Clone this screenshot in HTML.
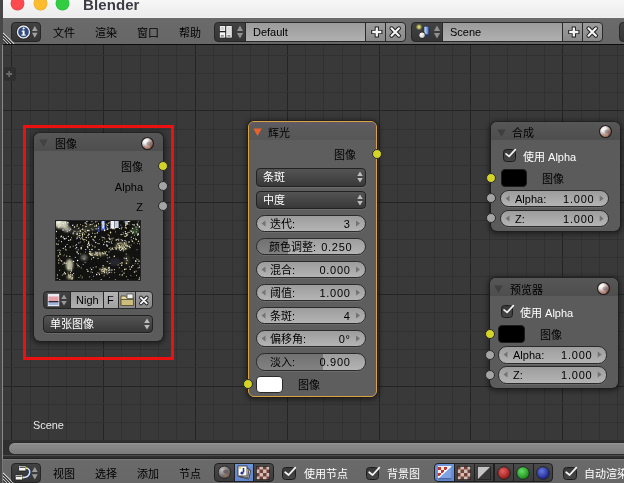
<!DOCTYPE html>
<html lang="zh"><head><meta charset="utf-8"><title>Blender</title>
<style>
html,body{margin:0;padding:0}
body{width:624px;height:483px;overflow:hidden;position:relative;background:#393939;font-family:"Liberation Sans","Noto Sans CJK SC",sans-serif;font-size:11px;line-height:1;color:#000}
.a{position:absolute}
.t{position:absolute;white-space:nowrap;line-height:14px;height:14px;will-change:transform}
.w{color:#fff}
.hdr{position:absolute;left:3px;width:621px;background:linear-gradient(#6a6a6a,#676767)}
.dk{position:absolute;background:linear-gradient(#424242,#353535);border:1px solid #262626;box-sizing:border-box}
.lt{position:absolute;background:linear-gradient(#9b9b9b,#b0b0b0);border:1px solid #292929;box-sizing:border-box}
.btn{position:absolute;background:linear-gradient(#9c9c9c,#8a8a8a);border:1px solid #292929;box-sizing:border-box}
.node{position:absolute;box-sizing:border-box;border-radius:6px;background:#5b5b5b;box-shadow:0 0 0 .6px rgba(20,20,20,.6),0 1px 5px 2px rgba(0,0,0,.45)}
.nh{position:absolute;left:0;top:0;right:0;height:18px;border-radius:6px 6px 0 0;background:linear-gradient(#575757,#4e4e4e)}
.sock{position:absolute;width:10px;height:10px;border-radius:50%;border:1px solid #2a2a2a;box-sizing:border-box}
.sy{background:#d3d328}
.sg{background:#a4a4a4}
.num{position:absolute;height:17.5px;box-sizing:border-box;border:1px solid #2b2b2b;border-radius:8.5px;background:linear-gradient(#9d9d9d,#b4b4b4);box-shadow:0 1px 0 rgba(255,255,255,.09)}
.dd{position:absolute;height:18.4px;box-sizing:border-box;border:1px solid #222;border-radius:4px;background:linear-gradient(#545454,#383838);box-shadow:0 1px 0 rgba(255,255,255,.09)}
.cb{position:absolute;width:13.6px;height:13.6px;box-sizing:border-box;border:1px solid #1c1c1c;border-radius:3.5px;background:linear-gradient(#383838,#464646)}
.n12{font-size:11px}
.nv{letter-spacing:.75px}
</style></head>
<body>
<svg class="a" style="left:0;top:45px" width="624" height="397" shape-rendering="crispEdges">
<rect x="0" y="0" width="624" height="397" fill="#393939"/>
<rect x="11" y="0" width="1" height="397" fill="#242424"/>
<rect x="30" y="0" width="1" height="397" fill="#313131"/>
<rect x="48" y="0" width="1" height="397" fill="#313131"/>
<rect x="66" y="0" width="1" height="397" fill="#313131"/>
<rect x="85" y="0" width="1" height="397" fill="#313131"/>
<rect x="103" y="0" width="1" height="397" fill="#242424"/>
<rect x="121" y="0" width="1" height="397" fill="#313131"/>
<rect x="140" y="0" width="1" height="397" fill="#313131"/>
<rect x="158" y="0" width="1" height="397" fill="#313131"/>
<rect x="176" y="0" width="1" height="397" fill="#313131"/>
<rect x="195" y="0" width="1" height="397" fill="#242424"/>
<rect x="213" y="0" width="1" height="397" fill="#313131"/>
<rect x="232" y="0" width="1" height="397" fill="#313131"/>
<rect x="250" y="0" width="1" height="397" fill="#313131"/>
<rect x="268" y="0" width="1" height="397" fill="#313131"/>
<rect x="287" y="0" width="1" height="397" fill="#242424"/>
<rect x="305" y="0" width="1" height="397" fill="#313131"/>
<rect x="323" y="0" width="1" height="397" fill="#313131"/>
<rect x="342" y="0" width="1" height="397" fill="#313131"/>
<rect x="360" y="0" width="1" height="397" fill="#313131"/>
<rect x="379" y="0" width="1" height="397" fill="#242424"/>
<rect x="397" y="0" width="1" height="397" fill="#313131"/>
<rect x="415" y="0" width="1" height="397" fill="#313131"/>
<rect x="434" y="0" width="1" height="397" fill="#313131"/>
<rect x="452" y="0" width="1" height="397" fill="#313131"/>
<rect x="470" y="0" width="1" height="397" fill="#242424"/>
<rect x="489" y="0" width="1" height="397" fill="#313131"/>
<rect x="507" y="0" width="1" height="397" fill="#313131"/>
<rect x="526" y="0" width="1" height="397" fill="#313131"/>
<rect x="544" y="0" width="1" height="397" fill="#313131"/>
<rect x="562" y="0" width="1" height="397" fill="#242424"/>
<rect x="581" y="0" width="1" height="397" fill="#313131"/>
<rect x="599" y="0" width="1" height="397" fill="#313131"/>
<rect x="617" y="0" width="1" height="397" fill="#313131"/>
<rect x="0" y="10" width="624" height="1" fill="#313131"/>
<rect x="0" y="28" width="624" height="1" fill="#313131"/>
<rect x="0" y="47" width="624" height="1" fill="#313131"/>
<rect x="0" y="65" width="624" height="1" fill="#242424"/>
<rect x="0" y="84" width="624" height="1" fill="#313131"/>
<rect x="0" y="102" width="624" height="1" fill="#313131"/>
<rect x="0" y="120" width="624" height="1" fill="#313131"/>
<rect x="0" y="139" width="624" height="1" fill="#313131"/>
<rect x="0" y="157" width="624" height="1" fill="#242424"/>
<rect x="0" y="175" width="624" height="1" fill="#313131"/>
<rect x="0" y="194" width="624" height="1" fill="#313131"/>
<rect x="0" y="212" width="624" height="1" fill="#313131"/>
<rect x="0" y="231" width="624" height="1" fill="#313131"/>
<rect x="0" y="249" width="624" height="1" fill="#242424"/>
<rect x="0" y="267" width="624" height="1" fill="#313131"/>
<rect x="0" y="286" width="624" height="1" fill="#313131"/>
<rect x="0" y="304" width="624" height="1" fill="#313131"/>
<rect x="0" y="322" width="624" height="1" fill="#313131"/>
<rect x="0" y="341" width="624" height="1" fill="#242424"/>
<rect x="0" y="359" width="624" height="1" fill="#313131"/>
<rect x="0" y="377" width="624" height="1" fill="#313131"/>
</svg>
<div class="a" style="left:0;top:0;width:3px;height:483px;background:#474747"></div>
<div class="a" style="left:1.9px;top:45px;width:1.3px;height:414px;background:#8a8a8a"></div>
<div class="a" style="left:3px;top:0;width:621px;height:18px;background:linear-gradient(#f7f7f7,#ececec 88%,#f1f1f1)"></div>
<div class="a" style="left:10.6px;top:-2.9px;width:13px;height:13px;border-radius:50%;background:#fc4a4f;box-shadow:0 0 0 .4px #e0383e"></div>
<div class="a" style="left:33.5px;top:-2.9px;width:13px;height:13px;border-radius:50%;background:#fdbc2e;box-shadow:0 0 0 .4px #e0a028"></div>
<div class="a" style="left:56.4px;top:-2.9px;width:13px;height:13px;border-radius:50%;background:#32cd41;box-shadow:0 0 0 .4px #27b335"></div>
<div class="t" style="left:82.5px;top:-5.5px;font-size:15px;font-weight:bold;line-height:20px;height:20px;color:#3d3d45;letter-spacing:.1px">Blender</div>
<div class="hdr" style="top:18px;height:26px"></div>
<div class="a" style="left:3px;top:43.8px;width:621px;height:1.6px;background:#0c0c0c"></div>
<svg class="a" style="left:3px;top:32px" width="13" height="12"><path d="M0 1 L11 12 M0 4 L8 12 M0 7 L5 12" stroke="#d8d8d8" stroke-width="1.3"/><path d="M0 2.5 L9.5 12 M0 5.5 L6.5 12 M0 8.5 L3.5 12" stroke="#333" stroke-width="1.2"/></svg>
<div class="dk" style="left:11px;top:22px;width:30px;height:20px;border-radius:4px"></div>
<svg class="a" style="left:14.8px;top:24px" width="26" height="16"><circle cx="8.5" cy="8" r="6" fill="#2f4a80" stroke="#e8e8e8" stroke-width="1.4"/><circle cx="8.5" cy="8" r="7.2" fill="none" stroke="#222" stroke-width=".6"/><rect x="7.6" y="6.6" width="2" height="4.6" fill="#fff"/><rect x="6.6" y="6.6" width="2" height="1" fill="#fff"/><rect x="6.4" y="10.6" width="4.4" height="1" fill="#fff"/><circle cx="8.6" cy="4.5" r="1.1" fill="#fff"/><path d="M19.8 2 L22.6 7 L17 7 Z M19.8 13.8 L22.6 8.8 L17 8.8 Z" fill="#a2a2a2"/></svg>
<div class="t" style="left:53px;top:26px">文件</div>
<div class="t" style="left:95px;top:26px">渲染</div>
<div class="t" style="left:137px;top:26px">窗口</div>
<div class="t" style="left:179px;top:26px">帮助</div>
<div class="dk" style="left:214px;top:22.1px;width:32px;height:19.8px;border-radius:4px 0 0 4px"></div>
<svg class="a" style="left:219px;top:25px" width="16" height="14"><rect x=".2" y=".4" width="13.2" height="12.8" rx="1.2" fill="#222"/><rect x=".8" y="1" width="5.4" height="5" fill="#efefef"/><rect x=".8" y="7.3" width="5.4" height="5.3" fill="#f6f6f6"/><rect x="7.2" y="1" width="5.6" height="11.6" fill="#efefef"/><rect x="1.8" y="10.4" width="3" height="1" fill="#444"/><rect x="8.4" y="10.4" width="3" height="1" fill="#444"/><rect x="1.6" y="2" width="3.6" height="3" fill="#d2d2d2"/><rect x="8.2" y="2" width="3.6" height="7" fill="#dcdcdc"/></svg>
<svg class="a" style="left:235.7px;top:24.7px" width="8" height="14"><path d="M4 .4 L7.1 6 L.9 6 Z M4 13.6 L7.1 8 L.9 8 Z" fill="#909090"/></svg>
<div class="lt" style="left:245px;top:22.1px;width:121px;height:19.8px"></div>
<div class="t" style="left:253px;top:25.4px">Default</div>
<div class="btn" style="left:365px;top:22.1px;width:21px;height:19.8px"></div>
<div class="btn" style="left:385px;top:22.1px;width:21px;height:19.8px;border-radius:0 4px 4px 0"></div>
<svg class="a" style="left:365px;top:21.8px" width="41" height="20"><path d="M11.8 4.4 V15.6 M6.2 10 H17.4" stroke="#1e1e1e" stroke-width="4.2"/><path d="M11.8 5.4 V14.6 M7.2 10 H16.4" stroke="#f6f6f6" stroke-width="2.3"/><path d="M26.5 6.3 L33.9 13.7 M33.9 6.3 L26.5 13.7" stroke="#1e1e1e" stroke-width="4.1" stroke-linecap="round"/><path d="M26.5 6.3 L33.9 13.7 M33.9 6.3 L26.5 13.7" stroke="#f6f6f6" stroke-width="2.2" stroke-linecap="round"/></svg>
<div class="dk" style="left:411px;top:22.1px;width:32px;height:19.8px;border-radius:4px 0 0 4px"></div>
<svg class="a" style="left:415px;top:24px" width="18" height="16"><defs><radialGradient id="ygl"><stop offset="0" stop-color="#f4f08a"/><stop offset=".45" stop-color="#c9c860" stop-opacity=".8"/><stop offset="1" stop-color="#8a8a40" stop-opacity="0"/></radialGradient><linearGradient id="cyl" x1="0" x2="1"><stop offset="0" stop-color="#dfe9fb"/><stop offset=".5" stop-color="#86a8e4"/><stop offset="1" stop-color="#3d5c9e"/></linearGradient><radialGradient id="wsp" cx=".4" cy=".35" r=".7"><stop offset="0" stop-color="#fff"/><stop offset=".6" stop-color="#d8d8d8"/><stop offset="1" stop-color="#777"/></radialGradient></defs><circle cx="4" cy="3" r="3.6" fill="url(#ygl)"/><path d="M12.5 9 L16 13.5 L11 13.5 Z" fill="#2b3a55"/><rect x="9" y="2.2" width="5" height="8.6" rx="1" fill="url(#cyl)" stroke="#1e2a44" stroke-width=".7"/><circle cx="7.1" cy="11.3" r="3.3" fill="url(#wsp)" stroke="#1a1a1a" stroke-width=".8"/></svg>
<svg class="a" style="left:432.7px;top:24.7px" width="8" height="14"><path d="M4 .4 L7.1 6 L.9 6 Z M4 13.6 L7.1 8 L.9 8 Z" fill="#909090"/></svg>
<div class="lt" style="left:442px;top:22.1px;width:121px;height:19.8px"></div>
<div class="t" style="left:450px;top:25.4px">Scene</div>
<div class="btn" style="left:562px;top:22.1px;width:21px;height:19.8px"></div>
<div class="btn" style="left:582px;top:22.1px;width:21px;height:19.8px;border-radius:0 4px 4px 0"></div>
<svg class="a" style="left:562px;top:21.8px" width="41" height="20"><path d="M11.8 4.4 V15.6 M6.2 10 H17.4" stroke="#1e1e1e" stroke-width="4.2"/><path d="M11.8 5.4 V14.6 M7.2 10 H16.4" stroke="#f6f6f6" stroke-width="2.3"/><path d="M26.5 6.3 L33.9 13.7 M33.9 6.3 L26.5 13.7" stroke="#1e1e1e" stroke-width="4.1" stroke-linecap="round"/><path d="M26.5 6.3 L33.9 13.7 M33.9 6.3 L26.5 13.7" stroke="#f6f6f6" stroke-width="2.2" stroke-linecap="round"/></svg>
<div class="dk" style="left:619px;top:22px;width:12px;height:20px;border-radius:4px 0 0 4px"></div>
<div class="a" style="left:4px;top:67px;width:12px;height:14px;border-radius:3px;background:#2f2f2f"></div>
<svg class="a" style="left:4px;top:67px" width="12" height="14"><path d="M5.2 4.1 V9.9 M2.3 7 H8.1" stroke="#6a6a6a" stroke-width="1.8"/></svg>
<div class="node" style="left:34px;top:133px;width:129px;height:208px"><div class="nh"></div></div>
<svg class="a" style="left:39.2px;top:139.2px" width="10" height="9"><path d="M.3 .4 H8.7 L4.5 8 Z" fill="#424242"/></svg>
<div class="t" style="left:55px;top:137px">图像</div>
<svg class="a" style="left:140.0px;top:135.7px" width="15" height="15"><defs><radialGradient id="sg1" cx=".33" cy=".3" r=".8"><stop offset="0" stop-color="#fff"/><stop offset=".28" stop-color="#efe8e8"/><stop offset=".58" stop-color="#b09894"/><stop offset=".82" stop-color="#80514a"/><stop offset="1" stop-color="#4c2c28"/></radialGradient></defs><circle cx="7.5" cy="7.5" r="6" fill="url(#sg1)" stroke="#1e1e1e" stroke-width="1.1"/><ellipse cx="9" cy="7.6" rx="2.6" ry="2" fill="#5e4e50" opacity=".4"/><ellipse cx="7.5" cy="11.3" rx="3" ry="1.5" fill="#d09a84" opacity=".55"/></svg>
<div class="t n12" style="left:60px;top:159.9px;width:83px;text-align:right">图像</div>
<div class="sock sy" style="left:158.0px;top:160.5px"></div>
<div class="t n12" style="left:60px;top:180.0px;width:83px;text-align:right">Alpha</div>
<div class="sock sg" style="left:158.0px;top:180.6px"></div>
<div class="t n12" style="left:60px;top:200.1px;width:83px;text-align:right">Z</div>
<div class="sock sg" style="left:158.0px;top:200.7px"></div>
<svg class="a" style="left:55px;top:220px" width="86" height="61"><defs><filter id="bl" x="-20%" y="-20%" width="140%" height="140%"><feGaussianBlur stdDeviation=".8"/></filter><filter id="b2"><feGaussianBlur stdDeviation=".35"/></filter></defs><rect width="86" height="61" fill="#121211"/><g filter="url(#bl)"><ellipse cx="6" cy="4" rx="7" ry="4.5" fill="#d2d1c0" opacity="0.95"/><ellipse cx="3" cy="2" rx="3.5" ry="2.5" fill="#efefe4" opacity="0.9"/><ellipse cx="12" cy="9" rx="3.5" ry="3" fill="#c4c3b0" opacity="0.8"/><ellipse cx="14.5" cy="45" rx="3.6" ry="6" fill="#c6c4ac" opacity="0.95"/><ellipse cx="15" cy="57" rx="3.2" ry="2.6" fill="#b5b39a" opacity="0.75"/><ellipse cx="29" cy="37.5" rx="3.4" ry="3" fill="#8a8a80" opacity="0.7"/><ellipse cx="43" cy="34" rx="8" ry="1.6" fill="#a9a680" opacity="0.6"/><ellipse cx="67" cy="26" rx="7" ry="4.5" fill="#8d8a68" opacity="0.45"/><ellipse cx="50" cy="50.5" rx="5" ry="3" fill="#9a9672" opacity="0.45"/><ellipse cx="80" cy="11" rx="4" ry="3.5" fill="#3f6244" opacity="0.7"/><ellipse cx="22" cy="12" rx="6" ry="4" fill="#4a4940" opacity="0.5"/><ellipse cx="35" cy="8" rx="7" ry="4" fill="#3a3a32" opacity="0.6"/><ellipse cx="60" cy="42" rx="6" ry="4" fill="#2c2f3c" opacity="0.7"/><ellipse cx="72" cy="40" rx="3" ry="5" fill="#55533f" opacity="0.5"/><ellipse cx="10" cy="22" rx="5" ry="4" fill="#0c0c0b" opacity="0.9"/><ellipse cx="36" cy="46" rx="6" ry="5" fill="#0c0c0b" opacity="0.8"/><ellipse cx="25" cy="24" rx="5" ry="3" fill="#0d0d0c" opacity="0.7"/><ellipse cx="78" cy="52" rx="6" ry="5" fill="#0e0e0d" opacity="0.8"/><ellipse cx="52" cy="22" rx="5" ry="4" fill="#0e0e0d" opacity="0.7"/></g><g filter="url(#b2)"><rect x="46" y=".5" width="4.2" height="10" fill="#3f5fd0"/><rect x="47.2" y="1" width="2" height="7.5" fill="#cfdcff"/><rect x="42.5" y="6" width="2.2" height="6" fill="#33448f"/><rect x="55.5" y=".5" width="4" height="8" fill="#eef2ff"/><rect x="60" y="1" width="3.6" height="7" fill="#c9d2ea"/><rect x="70" y=".5" width="3" height="4" fill="#9aa6d8"/><path d="M28.2 9.9h.01M71.6 56.7h.01M69.2 2.0h.01M78.6 18.5h.01M47.4 20.2h.01M76.2 11.0h.01M12.3 5.3h.01M25.8 55.8h.01M76.1 25.1h.01M27.6 18.7h.01M56.7 52.3h.01M22.3 6.2h.01M66.2 23.7h.01M62.2 27.3h.01M60.3 27.7h.01M67.1 29.4h.01M65.8 26.7h.01M48.9 48.8h.01M33.0 10.7h.01M75.2 10.9h.01" stroke="#f6efc0" stroke-width="0.8" stroke-linecap="round"/><path d="M31.7 4.4h.01M84.1 58.9h.01M53.5 52.9h.01M21.8 43.8h.01M76.2 19.9h.01M83.1 5.0h.01M54.6 15.9h.01M15.5 56.6h.01M81.5 55.6h.01M78.1 37.8h.01M18.2 26.2h.01M74.5 26.7h.01M64.6 29.3h.01M69.1 29.7h.01M41.1 33.2h.01M47.7 49.6h.01M15.0 57.0h.01M15.8 54.8h.01" stroke="#fff8d4" stroke-width="0.8" stroke-linecap="round"/><path d="M37.4 13.3h.01M71.6 13.8h.01M53.2 3.5h.01M1.6 18.2h.01M28.5 19.9h.01M34.6 31.6h.01M73.0 59.8h.01M20.8 28.7h.01M52.8 38.0h.01M36.9 1.6h.01M39.6 6.2h.01M75.3 27.6h.01M50.4 32.7h.01M35.4 34.7h.01M46.6 51.0h.01M20.0 11.5h.01M73.2 12.4h.01M77.9 12.2h.01M83.0 13.5h.01M78.4 12.2h.01" stroke="#f6efc0" stroke-width="1" stroke-linecap="round"/><path d="M54.0 18.0h.01M77.4 45.4h.01M81.1 51.1h.01M52.2 53.9h.01M4.1 30.0h.01M68.4 30.8h.01M43.9 29.6h.01M44.1 32.3h.01M66.8 25.7h.01M68.8 28.1h.01M50.5 33.8h.01M44.9 33.3h.01M48.6 51.0h.01M51.4 52.2h.01M40.0 13.6h.01" stroke="#fff8d4" stroke-width="1" stroke-linecap="round"/><path d="M4.9 5.2h.01M17.0 59.1h.01M13.3 16.3h.01M10.5 26.4h.01M22.3 4.8h.01M15.7 19.7h.01M10.0 2.0h.01M62.6 19.5h.01M18.6 41.4h.01M52.2 41.6h.01M4.7 59.8h.01M64.7 8.5h.01M35.6 4.6h.01" stroke="#f6efc0" stroke-width="1.2" stroke-linecap="round"/><path d="M48.1 17.6h.01M13.8 20.4h.01M33.8 14.0h.01M70.8 5.2h.01M70.6 28.6h.01M44.5 54.6h.01M84.1 47.6h.01M82.7 15.2h.01M40.0 26.9h.01M17.7 5.4h.01M23.3 33.7h.01M40.7 1.8h.01M41.1 8.8h.01M22.1 13.9h.01M8.2 28.3h.01M40.9 32.0h.01M30.8 29.5h.01M32.0 49.5h.01M15.7 9.1h.01M10.5 2.7h.01M70.0 20.5h.01M5.0 34.3h.01" stroke="#ffffff" stroke-width="1.2" stroke-linecap="round"/><path d="M9.2 43.0h.01M52.3 9.3h.01M76.6 47.0h.01M12.9 2.8h.01M4.1 2.1h.01M72.1 14.9h.01M83.2 14.3h.01M1.0 24.1h.01M9.4 18.7h.01M22.6 40.4h.01M84.8 6.4h.01M84.2 7.0h.01M1.2 11.4h.01M32.9 51.3h.01M61.1 29.0h.01M49.6 10.4h.01M37.0 29.5h.01M79.1 5.1h.01M41.7 54.4h.01M74.0 21.9h.01M70.8 13.4h.01M33.5 23.2h.01M54.0 47.5h.01M71.3 38.6h.01M51.9 21.5h.01M46.2 59.9h.01M10.3 53.8h.01" stroke="#ffffff" stroke-width="1.5" stroke-linecap="round"/><path d="M58.2 18.0h.01M49.3 32.0h.01M62.4 19.3h.01M35.1 32.7h.01M53.2 8.9h.01M22.9 16.6h.01M79.1 23.0h.01M57.1 20.1h.01M49.9 31.8h.01M84.7 45.8h.01M40.3 34.2h.01M82.9 48.0h.01M51.5 49.9h.01M55.6 12.9h.01M63.1 44.9h.01M67.1 51.1h.01" stroke="#a8a47c" stroke-width="1.2" stroke-linecap="round"/><path d="M26.2 47.9h.01M51.5 7.0h.01M37.4 52.4h.01M70.5 5.4h.01M24.3 46.6h.01M13.0 53.1h.01M38.0 19.1h.01M23.6 8.6h.01M8.0 17.5h.01M42.1 1.2h.01M84.5 23.8h.01M82.7 5.5h.01M47.3 3.3h.01M20.7 25.6h.01M53.2 14.7h.01M7.9 44.3h.01M54.5 22.2h.01M30.1 42.6h.01M61.2 27.9h.01M74.8 1.6h.01M16.5 17.7h.01M64.6 28.2h.01M64.5 26.9h.01M64.1 25.5h.01M53.4 50.6h.01M33.5 17.5h.01M42.1 13.0h.01M36.8 8.8h.01M25.0 15.6h.01M68.8 14.0h.01" stroke="#ffffff" stroke-width="0.8" stroke-linecap="round"/><path d="M52.2 5.3h.01M37.0 4.5h.01M6.5 21.7h.01M76.3 17.2h.01M3.8 7.6h.01M81.8 7.0h.01M43.0 38.3h.01M21.4 24.6h.01M54.9 43.5h.01M14.8 36.4h.01M36.8 60.0h.01M71.0 48.9h.01M16.6 50.1h.01" stroke="#e4deb0" stroke-width="1.2" stroke-linecap="round"/><path d="M29.6 21.7h.01M54.3 57.4h.01M80.1 43.6h.01M53.2 15.4h.01M43.7 4.8h.01M14.9 56.4h.01M9.5 34.9h.01M17.6 41.9h.01M47.6 5.0h.01M27.1 26.0h.01M71.3 3.8h.01M39.0 21.0h.01M44.6 19.5h.01M49.3 51.6h.01M36.3 24.4h.01M8.1 35.8h.01" stroke="#a8a47c" stroke-width="0.8" stroke-linecap="round"/><path d="M61.2 28.3h.01M31.6 20.4h.01M49.8 9.4h.01M51.7 4.3h.01M47.0 17.1h.01M66.1 19.5h.01M69.4 49.3h.01M36.0 52.0h.01M63.7 20.3h.01M62.9 4.9h.01M82.9 43.7h.01M82.9 39.6h.01M83.2 1.9h.01M72.2 4.2h.01M67.6 28.1h.01M49.4 50.9h.01M46.6 49.8h.01M13.6 54.8h.01M17.6 58.1h.01M81.9 9.3h.01" stroke="#f0e4ac" stroke-width="1" stroke-linecap="round"/><path d="M75.2 49.3h.01M27.2 9.5h.01M22.2 18.0h.01M40.7 22.4h.01M48.1 45.8h.01M55.9 29.7h.01M66.8 14.6h.01M9.5 6.8h.01M3.1 24.3h.01" stroke="#d4cfa6" stroke-width="1.5" stroke-linecap="round"/><path d="M83.9 41.3h.01M54.5 37.2h.01M2.2 58.3h.01M66.9 7.3h.01M64.8 54.8h.01M34.5 29.7h.01M71.2 34.0h.01M69.2 38.2h.01M42.8 34.9h.01M42.6 12.8h.01M77.8 4.5h.01M43.2 8.6h.01M4.7 32.4h.01M5.9 17.0h.01M15.3 54.4h.01M49.3 17.9h.01M15.2 26.9h.01M29.1 38.9h.01M72.1 40.4h.01M72.4 25.9h.01M10.2 18.9h.01M30.1 10.0h.01M16.3 51.1h.01M37.9 9.8h.01M11.3 18.2h.01M28.2 12.8h.01M52.5 8.0h.01M71.1 21.9h.01M54.0 31.9h.01M74.5 26.2h.01M65.2 27.3h.01M65.3 30.5h.01M41.8 33.3h.01M47.9 47.8h.01M51.8 49.7h.01M49.6 52.7h.01M18.7 53.5h.01M24.3 17.6h.01M22.1 13.1h.01" stroke="#ffffff" stroke-width="1" stroke-linecap="round"/><path d="M8.0 9.9h.01M52.2 25.9h.01M19.5 6.9h.01M33.9 10.4h.01M34.5 33.7h.01M26.2 27.7h.01M73.4 1.6h.01M57.9 8.4h.01M41.4 5.2h.01M57.2 28.3h.01M59.3 36.2h.01" stroke="#fff8d4" stroke-width="1.5" stroke-linecap="round"/><path d="M34.4 24.3h.01M8.5 4.4h.01M8.6 18.0h.01M82.6 23.4h.01M56.1 18.7h.01M55.2 8.3h.01M2.8 30.4h.01M78.4 18.3h.01M38.2 3.3h.01M65.9 5.1h.01M72.5 13.0h.01M53.7 22.0h.01M21.6 18.8h.01M56.4 22.4h.01M80.6 18.3h.01M18.0 4.9h.01" stroke="#ccd3f0" stroke-width="0.8" stroke-linecap="round"/><path d="M80.7 7.0h.01M60.3 59.7h.01M4.7 50.3h.01M39.1 20.6h.01M3.9 20.9h.01M28.2 44.5h.01M33.8 24.9h.01M35.7 31.6h.01M18.3 12.6h.01M45.9 32.9h.01M82.5 4.1h.01" stroke="#ccd3f0" stroke-width="1" stroke-linecap="round"/><path d="M10.7 29.8h.01M71.1 4.6h.01M8.8 53.9h.01M3.7 42.9h.01M70.4 7.3h.01M5.3 33.9h.01M49.4 4.1h.01" stroke="#a8a47c" stroke-width="1.5" stroke-linecap="round"/><path d="M69.7 16.0h.01M38.6 56.3h.01M35.8 31.9h.01M60.6 11.9h.01M71.3 3.6h.01M34.6 5.0h.01M27.0 58.0h.01M54.4 2.7h.01M25.6 4.6h.01M30.6 32.0h.01M82.0 29.7h.01M62.2 24.5h.01M69.7 23.2h.01M69.3 24.4h.01M67.1 26.7h.01M65.8 27.2h.01M47.7 33.1h.01M45.7 36.0h.01M41.4 34.1h.01M49.7 52.4h.01M49.5 49.0h.01M48.0 49.3h.01M16.1 58.5h.01M14.3 55.6h.01M24.1 7.9h.01M18.9 11.0h.01" stroke="#f0e4ac" stroke-width="0.8" stroke-linecap="round"/><path d="M77.4 21.3h.01M8.1 3.5h.01M40.1 16.6h.01M6.4 16.3h.01M32.6 10.6h.01M32.5 26.8h.01M69.7 49.4h.01M25.2 11.1h.01M54.9 19.2h.01M61.2 19.9h.01M60.3 7.8h.01M84.2 59.9h.01M74.1 1.3h.01M80.6 40.9h.01" stroke="#f6efc0" stroke-width="1.5" stroke-linecap="round"/><path d="M66.7 45.3h.01M3.3 35.9h.01M83.5 21.2h.01M26.2 28.8h.01M80.8 41.2h.01M67.3 54.9h.01M38.5 37.5h.01M52.1 35.1h.01M6.6 41.1h.01M13.2 48.0h.01M79.5 52.1h.01M66.9 42.8h.01" stroke="#e4deb0" stroke-width="1.5" stroke-linecap="round"/><path d="M67.3 20.6h.01M21.6 27.4h.01M31.9 1.6h.01M30.2 2.9h.01M51.7 24.9h.01M54.7 49.9h.01M56.9 50.0h.01M48.7 24.5h.01" stroke="#ccd3f0" stroke-width="1.5" stroke-linecap="round"/><path d="M34.7 56.9h.01M74.3 46.8h.01M5.3 40.1h.01M55.1 27.9h.01M16.4 48.4h.01M49.1 55.7h.01M52.0 21.7h.01M12.1 24.5h.01M67.3 24.1h.01M23.5 45.5h.01M84.5 57.7h.01M49.5 22.2h.01M12.6 11.6h.01M32.5 24.7h.01M65.8 22.9h.01M67.1 27.6h.01M63.6 23.6h.01M49.5 50.9h.01M15.5 52.5h.01M81.3 11.9h.01" stroke="#e4deb0" stroke-width="1" stroke-linecap="round"/><path d="M56.2 21.7h.01M42.8 52.7h.01M35.3 48.0h.01M5.6 30.7h.01M51.6 31.5h.01M4.3 38.4h.01M65.7 14.7h.01M62.6 23.4h.01M10.2 27.9h.01M74.1 4.2h.01M73.4 26.3h.01M64.3 23.3h.01M44.9 33.8h.01M47.4 32.6h.01M50.8 49.2h.01M79.5 15.3h.01M68.1 12.4h.01" stroke="#e4deb0" stroke-width="0.8" stroke-linecap="round"/><path d="M59.2 27.7h.01M61.4 3.9h.01M15.1 27.3h.01M81.6 39.0h.01M8.4 16.7h.01M23.3 15.5h.01M43.3 29.6h.01M50.0 19.1h.01M27.6 57.0h.01M44.6 29.7h.01M23.0 47.0h.01M53.8 2.6h.01M21.4 6.2h.01" stroke="#a8a47c" stroke-width="1" stroke-linecap="round"/><path d="M59.7 52.7h.01M23.0 11.7h.01M46.9 53.4h.01M56.9 23.5h.01M65.2 43.5h.01M64.3 47.7h.01M25.3 22.1h.01M38.2 47.6h.01M31.2 3.4h.01M2.3 54.7h.01M15.3 19.8h.01M68.5 26.2h.01M63.7 25.1h.01M14.2 57.6h.01" stroke="#d4cfa6" stroke-width="1" stroke-linecap="round"/><path d="M31.0 6.4h.01M3.9 6.3h.01M81.1 19.4h.01M36.6 49.4h.01M55.5 12.3h.01M82.2 4.3h.01M34.4 25.2h.01M71.2 8.0h.01M11.1 43.2h.01M71.4 43.2h.01M33.7 22.1h.01" stroke="#f0e4ac" stroke-width="1.5" stroke-linecap="round"/><path d="M23.8 22.9h.01M23.2 29.8h.01M63.8 19.1h.01M54.6 52.4h.01M84.1 41.0h.01" stroke="#ccd3f0" stroke-width="1.2" stroke-linecap="round"/><path d="M25.4 11.1h.01M59.2 8.8h.01M29.9 19.6h.01M64.1 27.9h.01M11.7 36.1h.01M24.8 13.3h.01M9.6 52.3h.01M69.0 53.2h.01M22.0 31.7h.01M44.0 23.6h.01" stroke="#fff8d4" stroke-width="1.2" stroke-linecap="round"/><path d="M56.4 4.9h.01M42.5 23.6h.01M78.7 45.6h.01M46.9 2.7h.01M75.9 55.6h.01M27.8 8.4h.01M25.6 33.9h.01M67.2 43.6h.01M82.3 4.0h.01M2.6 55.7h.01M11.3 30.1h.01M57.1 18.7h.01M34.4 25.6h.01M68.6 27.0h.01M66.8 27.1h.01M74.4 27.8h.01M68.3 25.1h.01M40.8 33.1h.01M47.7 49.3h.01M74.5 12.4h.01M72.9 14.2h.01" stroke="#d4cfa6" stroke-width="0.8" stroke-linecap="round"/><path d="M52.8 5.3h.01M23.9 57.5h.01M66.5 8.8h.01M27.8 5.7h.01M20.3 37.3h.01M36.5 39.1h.01M58.0 29.4h.01M54.2 28.6h.01M37.6 25.9h.01M41.1 46.9h.01M43.5 3.7h.01M44.0 53.2h.01M14.6 10.4h.01" stroke="#d4cfa6" stroke-width="1.2" stroke-linecap="round"/><path d="M3.7 40.2h.01M22.6 45.1h.01M22.2 32.6h.01M59.4 49.7h.01M7.3 55.0h.01M61.3 26.0h.01M54.2 18.3h.01M32.9 27.7h.01" stroke="#f0e4ac" stroke-width="1.2" stroke-linecap="round"/><path d="M68.4 28.8h.01M66.5 29.6h.01M28.1 19.4h.01M29.6 14.2h.01M26.9 17.7h.01M41.2 6.4h.01M25.5 18.8h.01M38.2 19.7h.01M27.3 13.2h.01M31.0 12.1h.01" stroke="#d4cfa6" stroke-width="1.3" stroke-linecap="round"/><path d="M71.9 25.9h.01M64.3 25.9h.01M37.0 35.4h.01M36.9 34.0h.01" stroke="#ffffff" stroke-width="1.3" stroke-linecap="round"/><path d="M69.3 22.9h.01M31.2 17.5h.01M27.6 16.0h.01M18.1 13.7h.01M71.5 15.8h.01" stroke="#fff8d4" stroke-width="1.3" stroke-linecap="round"/><path d="M67.2 28.5h.01M45.1 34.8h.01M39.9 34.8h.01M42.5 32.8h.01M35.8 34.8h.01M35.4 34.0h.01M50.1 49.4h.01M50.0 48.3h.01M53.9 48.7h.01M39.9 17.3h.01M24.7 15.7h.01M34.0 14.4h.01M27.5 14.5h.01M70.2 16.4h.01" stroke="#f0e4ac" stroke-width="1.3" stroke-linecap="round"/><path d="M64.2 27.4h.01M70.8 25.4h.01M71.0 28.9h.01M71.0 24.0h.01M48.0 33.7h.01M17.5 54.9h.01M17.4 57.8h.01M13.9 56.0h.01M30.0 11.3h.01M36.4 16.6h.01M70.4 11.7h.01M77.6 8.4h.01" stroke="#e4deb0" stroke-width="1.3" stroke-linecap="round"/><path d="M69.5 27.1h.01M42.1 35.3h.01M49.0 33.6h.01M48.0 51.5h.01M45.0 49.1h.01M33.0 15.6h.01M22.1 14.3h.01M76.3 11.3h.01M77.6 13.1h.01" stroke="#f6efc0" stroke-width="1.3" stroke-linecap="round"/></g><rect x=".5" y=".5" width="85" height="60" fill="none" stroke="#222" stroke-width="1"/></svg>
<div class="dk" style="left:43px;top:291.2px;width:27.5px;height:18.3px;border-radius:4px 0 0 4px"></div>
<svg class="a" style="left:47px;top:293.2px" width="14" height="14"><rect x=".5" y=".5" width="12" height="13" fill="#e9e9f2" stroke="#555" stroke-width=".8"/><rect x="1.5" y="3.5" width="10" height="4.5" fill="#e8a0a8"/><rect x="1.5" y="8" width="10" height="1.6" fill="#2a2a3a"/><rect x="1.5" y="9.6" width="10" height="2.4" fill="#9fb3dc"/></svg>
<svg class="a" style="left:60.2px;top:293.2px" width="8" height="14"><path d="M4 1.5 L6.8 6 L1.2 6 Z M4 12.5 L6.8 8 L1.2 8 Z" fill="#9a9a9a"/></svg>
<div class="lt" style="left:69.5px;top:291.2px;width:34px;height:18.3px"></div>
<div class="t n12" style="left:76px;top:293.2px">Nigh</div>
<div class="btn" style="left:103px;top:291.2px;width:16px;height:18.3px;background:linear-gradient(#b4b4b4,#a2a2a2)"></div>
<div class="t n12" style="left:107px;top:293.2px">F</div>
<div class="btn" style="left:118px;top:291.2px;width:18px;height:18.3px"></div>
<svg class="a" style="left:120px;top:293.2px" width="15" height="14"><path d="M1 3 H5.5 L6.5 4.5 H13.5 V12.5 H1 Z" fill="#e3d49a" stroke="#5a5230" stroke-width=".9"/><rect x="7" y="1" width="6" height="4.5" fill="#f4f4f4" stroke="#444" stroke-width=".7"/><path d="M1 6.5 H13.5 V12.5 H1 Z" fill="#cdbd7c" stroke="#5a5230" stroke-width=".9"/></svg>
<div class="btn" style="left:135px;top:291.2px;width:18px;height:18.3px;border-radius:0 4px 4px 0"></div>
<svg class="a" style="left:135px;top:291.2px" width="18" height="18"><path d="M5.9 6.6 L11.7 12.4 M11.7 6.6 L5.9 12.4" stroke="#222" stroke-width="3.8" stroke-linecap="round"/><path d="M5.9 6.6 L11.7 12.4 M11.7 6.6 L5.9 12.4" stroke="#f4f4f4" stroke-width="2" stroke-linecap="round"/></svg>
<div class="dd" style="left:43.0px;top:314.5px;width:110.0px"></div>
<div class="t w" style="left:50.0px;top:316.5px">单张图像</div>
<svg class="a" style="left:143.3px;top:316.5px" width="8" height="14"><path d="M4 1.5 L6.8 6 L1.2 6 Z M4 12.5 L6.8 8 L1.2 8 Z" fill="#bdbdbd"/></svg>
<div class="a" style="left:23.4px;top:125px;width:144.2px;height:229px;border:3.2px solid #ec1010"></div>
<div class="node" style="left:248px;top:121px;width:129px;height:276px;border:1px solid #dba244;background:#5e5e5e"><div class="nh" style="background:linear-gradient(#625a66,#5b5a5c 30%,#575757);border-radius:5px 5px 0 0"></div></div>
<svg class="a" style="left:252.9px;top:128.0px" width="10" height="9"><path d="M.3 .4 H8.7 L4.5 8 Z" fill="#e4642c"/></svg>
<div class="t" style="left:268px;top:125.5px">辉光</div>
<div class="t n12" style="left:300px;top:148px;width:56px;text-align:right">图像</div>
<div class="sock sy" style="left:372.0px;top:148.5px"></div>
<div class="dd" style="left:256.2px;top:168.3px;width:109.5px"></div>
<div class="t w" style="left:263.2px;top:170.3px">条斑</div>
<svg class="a" style="left:356.0px;top:170.3px" width="8" height="14"><path d="M4 1.5 L6.8 6 L1.2 6 Z M4 12.5 L6.8 8 L1.2 8 Z" fill="#bdbdbd"/></svg>
<div class="dd" style="left:256.2px;top:191.0px;width:109.5px"></div>
<div class="t w" style="left:263.2px;top:193.0px">中度</div>
<svg class="a" style="left:356.0px;top:193.0px" width="8" height="14"><path d="M4 1.5 L6.8 6 L1.2 6 Z M4 12.5 L6.8 8 L1.2 8 Z" fill="#bdbdbd"/></svg>
<div class="num" style="left:256.2px;top:214.5px;width:109.5px"></div>
<svg class="a" style="left:256.2px;top:214.5px" width="109" height="17"><path d="M5.5 8.5 L9.5 5.5 V11.5 Z" fill="#737373"/><path d="M104.0 8.5 L100.0 5.5 V11.5 Z" fill="#737373"/></svg>
<div class="t n12" style="left:269.6px;top:216.5px">迭代:</div>
<div class="t n12 nv" style="left:256.2px;top:216.5px;width:94.7px;text-align:right">3</div>
<div class="num" style="left:256.2px;top:237.6px;width:109.5px;background:linear-gradient(90deg,rgba(0,0,0,.28) 31.5px,rgba(0,0,0,0) 31.5px),linear-gradient(#9d9d9d,#b4b4b4)"></div>
<div class="t n12" style="left:256.2px;top:239.6px;width:109.5px;text-align:center">颜色调整:<span class="nv" style="margin-left:5px">0.250</span></div>
<div class="num" style="left:256.2px;top:260.7px;width:109.5px"></div>
<svg class="a" style="left:256.2px;top:260.7px" width="109" height="17"><path d="M5.5 8.5 L9.5 5.5 V11.5 Z" fill="#737373"/><path d="M104.0 8.5 L100.0 5.5 V11.5 Z" fill="#737373"/></svg>
<div class="t n12" style="left:269.6px;top:262.7px">混合:</div>
<div class="t n12 nv" style="left:256.2px;top:262.7px;width:94.7px;text-align:right">0.000</div>
<div class="num" style="left:256.2px;top:283.7px;width:109.5px"></div>
<svg class="a" style="left:256.2px;top:283.7px" width="109" height="17"><path d="M5.5 8.5 L9.5 5.5 V11.5 Z" fill="#737373"/><path d="M104.0 8.5 L100.0 5.5 V11.5 Z" fill="#737373"/></svg>
<div class="t n12" style="left:269.6px;top:285.7px">阈值:</div>
<div class="t n12 nv" style="left:256.2px;top:285.7px;width:94.7px;text-align:right">1.000</div>
<div class="num" style="left:256.2px;top:306.8px;width:109.5px"></div>
<svg class="a" style="left:256.2px;top:306.8px" width="109" height="17"><path d="M5.5 8.5 L9.5 5.5 V11.5 Z" fill="#737373"/><path d="M104.0 8.5 L100.0 5.5 V11.5 Z" fill="#737373"/></svg>
<div class="t n12" style="left:269.6px;top:308.8px">条斑:</div>
<div class="t n12 nv" style="left:256.2px;top:308.8px;width:94.7px;text-align:right">4</div>
<div class="num" style="left:256.2px;top:329.9px;width:109.5px"></div>
<svg class="a" style="left:256.2px;top:329.9px" width="109" height="17"><path d="M5.5 8.5 L9.5 5.5 V11.5 Z" fill="#737373"/><path d="M104.0 8.5 L100.0 5.5 V11.5 Z" fill="#737373"/></svg>
<div class="t n12" style="left:269.6px;top:331.9px">偏移角:</div>
<div class="t n12 nv" style="left:256.2px;top:331.9px;width:94.7px;text-align:right">0°</div>
<div class="num" style="left:256.2px;top:353.0px;width:109.5px;background:linear-gradient(90deg,rgba(0,0,0,.28) 66.0px,rgba(0,0,0,0) 66.0px),linear-gradient(#9d9d9d,#b4b4b4)"></div>
<div class="t n12" style="left:269.6px;top:355.0px">淡入:</div>
<div class="t n12 nv" style="left:256.2px;top:355.0px;width:94.7px;text-align:right">0.900</div>
<div class="sock sy" style="left:243.3px;top:378.5px"></div>
<div class="a" style="left:256.2px;top:375.5px;width:27px;height:17px;border-radius:4px;background:#fff;border:1px solid #2a2a2a;box-sizing:border-box"></div>
<div class="t n12" style="left:298px;top:377.7px">图像</div>
<div class="node" style="left:490.8px;top:121.7px;width:129.2px;height:109.8px"><div class="nh"></div></div>
<div class="sock sy" style="left:486.0px;top:172.7px"></div>
<div class="sock sg" style="left:486.0px;top:193.2px"></div>
<div class="sock sg" style="left:486.0px;top:213.2px"></div>
<svg class="a" style="left:496.6px;top:128.5px" width="10" height="9"><path d="M.3 .4 H8.7 L4.5 8 Z" fill="#3f3f3f"/></svg>
<div class="t" style="left:512.0px;top:126.2px">合成</div>
<svg class="a" style="left:598.0px;top:124.2px" width="15" height="15"><defs><radialGradient id="sg3" cx=".33" cy=".3" r=".8"><stop offset="0" stop-color="#fff"/><stop offset=".28" stop-color="#efe8e8"/><stop offset=".58" stop-color="#b09894"/><stop offset=".82" stop-color="#80514a"/><stop offset="1" stop-color="#4c2c28"/></radialGradient></defs><circle cx="7.5" cy="7.5" r="6" fill="url(#sg3)" stroke="#1e1e1e" stroke-width="1.1"/><ellipse cx="9" cy="7.6" rx="2.6" ry="2" fill="#5e4e50" opacity=".4"/><ellipse cx="7.5" cy="11.3" rx="3" ry="1.5" fill="#d09a84" opacity=".55"/></svg>
<div class="cb" style="left:503.0px;top:149.1px;width:12.6px;height:12.6px"></div>
<svg class="a" style="left:502.0px;top:145.1px" width="18" height="18"><path d="M4.0 8.9 L7.1 11.4 L13.3 4.6" fill="none" stroke="#f4f4f4" stroke-width="1.67" stroke-linecap="round" stroke-linejoin="round"/></svg>
<div class="t w n12" style="left:522.6px;top:149.7px">使用 Alpha</div>
<div class="a" style="left:500.6px;top:169.1px;width:26.2px;height:17.6px;border-radius:4px;background:#000;border:1px solid #1c1c1c;box-sizing:border-box"></div>
<div class="t n12" style="left:542.3px;top:172.1px">图像</div>
<div class="num" style="left:500.3px;top:189.7px;width:109.2px"></div>
<svg class="a" style="left:500.3px;top:189.7px" width="109" height="17"><path d="M5.5 8.5 L9.5 5.5 V11.5 Z" fill="#737373"/><path d="M103.7 8.5 L99.7 5.5 V11.5 Z" fill="#737373"/></svg>
<div class="t n12" style="left:515.1px;top:191.7px">Alpha:</div>
<div class="t n12 nv" style="left:500.3px;top:191.7px;width:94.4px;text-align:right">1.000</div>
<div class="num" style="left:500.3px;top:209.9px;width:109.2px"></div>
<svg class="a" style="left:500.3px;top:209.9px" width="109" height="17"><path d="M5.5 8.5 L9.5 5.5 V11.5 Z" fill="#737373"/><path d="M103.7 8.5 L99.7 5.5 V11.5 Z" fill="#737373"/></svg>
<div class="t n12" style="left:515.1px;top:211.9px">Z:</div>
<div class="t n12 nv" style="left:500.3px;top:211.9px;width:94.4px;text-align:right">1.000</div>
<div class="node" style="left:489.9px;top:278.0px;width:128.3px;height:109.8px"><div class="nh"></div></div>
<div class="sock sy" style="left:485.1px;top:329.0px"></div>
<div class="sock sg" style="left:485.1px;top:349.5px"></div>
<div class="sock sg" style="left:485.1px;top:369.5px"></div>
<svg class="a" style="left:494.4px;top:284.8px" width="10" height="9"><path d="M.3 .4 H8.7 L4.5 8 Z" fill="#3f3f3f"/></svg>
<div class="t" style="left:509.8px;top:282.5px">预览器</div>
<svg class="a" style="left:595.8px;top:280.5px" width="15" height="15"><defs><radialGradient id="sg4" cx=".33" cy=".3" r=".8"><stop offset="0" stop-color="#fff"/><stop offset=".28" stop-color="#efe8e8"/><stop offset=".58" stop-color="#b09894"/><stop offset=".82" stop-color="#80514a"/><stop offset="1" stop-color="#4c2c28"/></radialGradient></defs><circle cx="7.5" cy="7.5" r="6" fill="url(#sg4)" stroke="#1e1e1e" stroke-width="1.1"/><ellipse cx="9" cy="7.6" rx="2.6" ry="2" fill="#5e4e50" opacity=".4"/><ellipse cx="7.5" cy="11.3" rx="3" ry="1.5" fill="#d09a84" opacity=".55"/></svg>
<div class="cb" style="left:500.8px;top:305.4px;width:12.6px;height:12.6px"></div>
<svg class="a" style="left:499.8px;top:301.4px" width="18" height="18"><path d="M4.0 8.9 L7.1 11.4 L13.3 4.6" fill="none" stroke="#f4f4f4" stroke-width="1.67" stroke-linecap="round" stroke-linejoin="round"/></svg>
<div class="t w n12" style="left:520.4px;top:306.0px">使用 Alpha</div>
<div class="a" style="left:498.4px;top:325.4px;width:26.2px;height:17.6px;border-radius:4px;background:#000;border:1px solid #1c1c1c;box-sizing:border-box"></div>
<div class="t n12" style="left:540.1px;top:328.4px">图像</div>
<div class="num" style="left:498.1px;top:346.0px;width:109.2px"></div>
<svg class="a" style="left:498.1px;top:346.0px" width="109" height="17"><path d="M5.5 8.5 L9.5 5.5 V11.5 Z" fill="#737373"/><path d="M103.7 8.5 L99.7 5.5 V11.5 Z" fill="#737373"/></svg>
<div class="t n12" style="left:512.9px;top:348.0px">Alpha:</div>
<div class="t n12 nv" style="left:498.1px;top:348.0px;width:94.4px;text-align:right">1.000</div>
<div class="num" style="left:498.1px;top:366.2px;width:109.2px"></div>
<svg class="a" style="left:498.1px;top:366.2px" width="109" height="17"><path d="M5.5 8.5 L9.5 5.5 V11.5 Z" fill="#737373"/><path d="M103.7 8.5 L99.7 5.5 V11.5 Z" fill="#737373"/></svg>
<div class="t n12" style="left:512.9px;top:368.2px">Z:</div>
<div class="t n12 nv" style="left:498.1px;top:368.2px;width:94.4px;text-align:right">1.000</div>
<div class="t" style="left:33px;top:418px;font-size:10.9px;color:#e8e8e8">Scene</div>
<div class="a" style="left:3px;top:440px;width:621px;height:19px;background:#2f2f2f"></div>
<div class="a" style="left:3px;top:455px;width:621px;height:1px;background:#4c4c4c"></div>
<div class="a" style="left:3px;top:457.6px;width:621px;height:1.2px;background:#222"></div>
<div class="a" style="left:7.5px;top:442px;width:630px;height:13px;border-radius:6.5px;background:linear-gradient(#989898,#8b8b8b 12%,#7b7b7b);border:1px solid #2a2a2a;box-sizing:border-box"></div>
<div class="hdr" style="top:458.7px;height:25px"></div>
<div class="a" style="left:3px;top:458.7px;width:621px;height:.9px;background:#7a7a7a"></div>
<div class="a" style="left:2.2px;top:459px;width:1px;height:24px;background:#767676"></div>
<svg class="a" style="left:3px;top:472px" width="13" height="12"><path d="M0 1 L11 12 M0 4 L8 12 M0 7 L5 12" stroke="#d8d8d8" stroke-width="1.3"/><path d="M0 2.5 L9.5 12 M0 5.5 L6.5 12 M0 8.5 L3.5 12" stroke="#333" stroke-width="1.2"/></svg>
<div class="dk" style="left:11px;top:463px;width:30px;height:20px;border-radius:4px"></div>
<svg class="a" style="left:14px;top:464px" width="26" height="19"><path d="M12.5 4.3 C17.5 4.5 17 13.5 9 13.6" fill="none" stroke="#27344f" stroke-width="3"/><path d="M12.5 4.3 C17.5 4.5 17 13.5 9 13.6" fill="none" stroke="#d5e2ff" stroke-width="1.5"/><rect x="4.6" y="1.4" width="7.4" height="5.6" rx=".8" fill="#f6f6f6" stroke="#1c1c1c" stroke-width=".9"/><rect x="5.6" y="2.6" width="5.4" height="1.3" fill="#4a4a4a"/><rect x="1.2" y="10.4" width="7.4" height="5.6" rx=".8" fill="#f6f6f6" stroke="#1c1c1c" stroke-width=".9"/><rect x="2.2" y="11.6" width="5.4" height="1.3" fill="#4a4a4a"/><circle cx="12.6" cy="4.3" r="1" fill="#f0e060"/><circle cx="9.2" cy="13.5" r="1" fill="#f0e060"/><path d="M20.8 3 L23.7 8 L17.9 8 Z M20.8 15.5 L23.7 10.3 L17.9 10.3 Z" fill="#9c9c9c"/></svg>
<div class="t" style="left:53px;top:467px">视图</div>
<div class="t" style="left:95px;top:467px">选择</div>
<div class="t" style="left:137px;top:467px">添加</div>
<div class="t" style="left:179px;top:467px">节点</div>
<div class="a" style="left:214.0px;top:463px;width:21.0px;height:19.0px;box-sizing:border-box;border:1px solid #1f1f1f;border-radius:4px 0 0 4px;background:linear-gradient(#4a4a4a,#3b3b3b)"></div>
<div class="a" style="left:234.0px;top:463px;width:20.0px;height:19.0px;box-sizing:border-box;border:1px solid #1f1f1f;border-radius:0 0 0 0;background:linear-gradient(#7094da,#6186ce)"></div>
<div class="a" style="left:253.0px;top:463px;width:21.0px;height:19.0px;box-sizing:border-box;border:1px solid #1f1f1f;border-radius:0 4px 4px 0;background:linear-gradient(#4a4a4a,#3b3b3b)"></div>
<svg class="a" style="left:216px;top:464px" width="17" height="17"><defs><radialGradient id="sgb" cx=".32" cy=".3" r=".8"><stop offset="0" stop-color="#c4c0c0"/><stop offset=".45" stop-color="#8a8484"/><stop offset="1" stop-color="#4a3c3a"/></radialGradient></defs><circle cx="8.5" cy="8.3" r="6.3" fill="url(#sgb)" stroke="#222" stroke-width=".9"/><ellipse cx="9.6" cy="7.6" rx="2.4" ry="2" fill="#4e4446" opacity=".6"/><ellipse cx="10.5" cy="11.5" rx="2.6" ry="1.6" fill="#a07860" opacity=".55"/></svg>
<svg class="a" style="left:236px;top:464px" width="17" height="17"><rect x="5" y="5" width="9" height="9" fill="#dcdcdc" stroke="#333" stroke-width=".8" transform="rotate(14 9 9)"/><rect x="3.5" y="4" width="9" height="9" fill="#f4f4f4" stroke="#333" stroke-width=".8" transform="rotate(7 8 8)"/><rect x="2" y="2" width="9" height="10" fill="#fff" stroke="#2a2a2a" stroke-width=".8"/><path d="M7.5 4 V8.5" stroke="#28358c" stroke-width="1.6"/><circle cx="6" cy="9" r="1.6" fill="#28358c"/><rect x="3" y="3" width="2" height="2" fill="#e4d66a"/></svg>
<svg class="a" style="left:256px;top:466px" width="14" height="14"><rect width="14" height="14" fill="#d2c0b6"/><rect x="0" y="0" width="3.5" height="3.5" fill="#74403a"/><rect x="0" y="7" width="3.5" height="3.5" fill="#74403a"/><rect x="3.5" y="3.5" width="3.5" height="3.5" fill="#74403a"/><rect x="3.5" y="10.5" width="3.5" height="3.5" fill="#74403a"/><rect x="7" y="0" width="3.5" height="3.5" fill="#74403a"/><rect x="7" y="7" width="3.5" height="3.5" fill="#74403a"/><rect x="10.5" y="3.5" width="3.5" height="3.5" fill="#74403a"/><rect x="10.5" y="10.5" width="3.5" height="3.5" fill="#74403a"/><rect x=".4" y=".4" width="13.2" height="13.2" fill="none" stroke="#2a2a2a" stroke-width=".8"/></svg>
<div class="cb" style="left:282.0px;top:466.5px;width:13.6px;height:13.6px"></div>
<svg class="a" style="left:281.0px;top:462.5px" width="18" height="18"><path d="M4.2 9.3 L7.6 12.0 L14.3 4.6" fill="none" stroke="#f4f4f4" stroke-width="1.80" stroke-linecap="round" stroke-linejoin="round"/></svg>
<div class="t w" style="left:304px;top:467px">使用节点</div>
<div class="cb" style="left:365.5px;top:466.5px;width:13.6px;height:13.6px"></div>
<svg class="a" style="left:364.5px;top:462.5px" width="18" height="18"><path d="M4.2 9.3 L7.6 12.0 L14.3 4.6" fill="none" stroke="#f4f4f4" stroke-width="1.80" stroke-linecap="round" stroke-linejoin="round"/></svg>
<div class="t w" style="left:387px;top:467px">背景图</div>
<div class="a" style="left:433.8px;top:463px;width:20.9px;height:19.0px;box-sizing:border-box;border:1px solid #1f1f1f;border-radius:4px 0 0 4px;background:linear-gradient(#7094da,#6186ce)"></div>
<div class="a" style="left:453.7px;top:463px;width:20.9px;height:19.0px;box-sizing:border-box;border:1px solid #1f1f1f;border-radius:0 0 0 0;background:linear-gradient(#4a4a4a,#3b3b3b)"></div>
<div class="a" style="left:473.6px;top:463px;width:20.9px;height:19.0px;box-sizing:border-box;border:1px solid #1f1f1f;border-radius:0 0 0 0;background:linear-gradient(#4a4a4a,#3b3b3b)"></div>
<div class="a" style="left:493.5px;top:463px;width:20.9px;height:19.0px;box-sizing:border-box;border:1px solid #1f1f1f;border-radius:0 0 0 0;background:linear-gradient(#4a4a4a,#3b3b3b)"></div>
<div class="a" style="left:513.4px;top:463px;width:20.9px;height:19.0px;box-sizing:border-box;border:1px solid #1f1f1f;border-radius:0 0 0 0;background:linear-gradient(#4a4a4a,#3b3b3b)"></div>
<div class="a" style="left:533.3px;top:463px;width:20.0px;height:19.0px;box-sizing:border-box;border:1px solid #1f1f1f;border-radius:0 4px 4px 0;background:linear-gradient(#4a4a4a,#3b3b3b)"></div>
<svg class="a" style="left:436.9px;top:466.3px" width="15" height="14"><rect width="14" height="13" fill="#fff"/><path d="M0 0 H14 L0 13 Z" fill="#f0f0f0"/><g fill="#c0342c"><rect x="1" y="1" width="3" height="3"/><rect x="7" y="1" width="3" height="3"/><rect x="4" y="4" width="3" height="3"/><rect x="1" y="7" width="3" height="3"/></g><path d="M14 0 V13 H0 Z" fill="#7fa2e4"/><path d="M14 0 L0 13" stroke="#fff" stroke-width="1.2"/><path d="M.3 0 V12.7 H14" fill="none" stroke="#2a3a66" stroke-width=".7"/></svg>
<svg class="a" style="left:456.6px;top:466px" width="14" height="14"><rect width="14" height="14" fill="#d2c0b6"/><rect x="0" y="0" width="3.5" height="3.5" fill="#74403a"/><rect x="0" y="7" width="3.5" height="3.5" fill="#74403a"/><rect x="3.5" y="3.5" width="3.5" height="3.5" fill="#74403a"/><rect x="3.5" y="10.5" width="3.5" height="3.5" fill="#74403a"/><rect x="7" y="0" width="3.5" height="3.5" fill="#74403a"/><rect x="7" y="7" width="3.5" height="3.5" fill="#74403a"/><rect x="10.5" y="3.5" width="3.5" height="3.5" fill="#74403a"/><rect x="10.5" y="10.5" width="3.5" height="3.5" fill="#74403a"/><rect x=".4" y=".4" width="13.2" height="13.2" fill="none" stroke="#2a2a2a" stroke-width=".8"/></svg>
<svg class="a" style="left:476.5px;top:466px" width="14" height="14"><rect width="14" height="14" fill="#383838"/><path d="M0 0 H14 L0 14 Z" fill="#c4c4c4"/><rect x=".4" y=".4" width="13.2" height="13.2" fill="none" stroke="#222" stroke-width=".8"/></svg>
<svg class="a" style="left:495.5px;top:465px" width="16" height="16"><defs><radialGradient id="cr" cx=".4" cy=".35" r=".7"><stop offset="0" stop-color="#e86060"/><stop offset="1" stop-color="#8a1212"/></radialGradient></defs><circle cx="8" cy="8" r="6.3" fill="url(#cr)" stroke="#1e1e1e" stroke-width=".9"/></svg>
<svg class="a" style="left:515.4px;top:465px" width="16" height="16"><defs><radialGradient id="cg" cx=".4" cy=".35" r=".7"><stop offset="0" stop-color="#66dd66"/><stop offset="1" stop-color="#128212"/></radialGradient></defs><circle cx="8" cy="8" r="6.3" fill="url(#cg)" stroke="#1e1e1e" stroke-width=".9"/></svg>
<svg class="a" style="left:535.3px;top:465px" width="16" height="16"><defs><radialGradient id="cb" cx=".4" cy=".35" r=".7"><stop offset="0" stop-color="#6878e0"/><stop offset="1" stop-color="#121a86"/></radialGradient></defs><circle cx="8" cy="8" r="6.3" fill="url(#cb)" stroke="#1e1e1e" stroke-width=".9"/></svg>
<div class="cb" style="left:563.0px;top:466.5px;width:13.6px;height:13.6px"></div>
<svg class="a" style="left:562.0px;top:462.5px" width="18" height="18"><path d="M4.2 9.3 L7.6 12.0 L14.3 4.6" fill="none" stroke="#f4f4f4" stroke-width="1.80" stroke-linecap="round" stroke-linejoin="round"/></svg>
<div class="t w" style="left:584px;top:467px">自动渲染</div>
</body></html>
